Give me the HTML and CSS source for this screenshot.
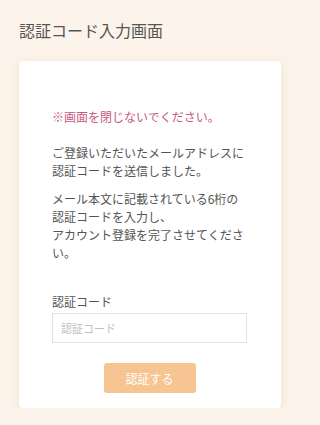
FILE: index.html
```html
<!DOCTYPE html>
<html lang="ja">
<head>
<meta charset="utf-8">
<meta name="viewport" content="width=device-width, initial-scale=1">
<link rel="stylesheet" href="styles.css">
</head>
<body>
<div class="page">
  <h1 class="title">認証コード入力画面</h1>
  <div class="card">
    <p class="warn">※画面を閉じないでください。</p>
    <p class="msg">ご登録いただいたメールアドレスに<br>認証コードを送信しました。</p>
    <p class="msg msg2">メール本文に記載されている6桁の<br>認証コードを入力し、<br>アカウント登録を完了させてください。</p>
    <label class="label" for="code">認証コード</label>
    <input class="input" id="code" type="text" placeholder="認証コード">
    <div class="actions"><button class="btn">認証する</button></div>
  </div>
</div>
</body>
</html>
```
FILE: styles.css
```css
html, body {
  margin: 0;
  padding: 0;
  background: #fcf3ea;
  font-family: "Noto Sans CJK JP", "Noto Sans", sans-serif;
  color: #555;
}
.page {
  width: 300px;
  box-sizing: border-box;
  padding: 20px 19px 0;
}
.title {
  margin: 0;
  font-size: 16px;
  font-weight: 400;
  line-height: 20px;
  color: #555;
}
.card {
  margin-top: 21px;
  background: #fff;
  border-radius: 4px;
  box-shadow: 0 2px 8px rgba(200, 170, 140, 0.25);
  padding: 47px 34px 15px 33px;
}
.warn {
  margin: 0;
  font-size: 12px;
  line-height: 18px;
  color: #c65a82;
}
.msg {
  margin: 18px 0 0;
  font-size: 12px;
  line-height: 18px;
  color: #555;
}
.msg2 {
  margin-top: 10px;
}
.label {
  display: block;
  margin-top: 31px;
  font-size: 12px;
  line-height: 18px;
  color: #555;
}
.input {
  display: block;
  box-sizing: border-box;
  width: 100%;
  height: 30px;
  margin-top: 2px;
  padding: 0 8px;
  border: 1px solid #e2e2e2;
  border-radius: 0;
  font-family: inherit;
  font-size: 11px;
  color: #555;
  background: #fff;
}
.input::placeholder {
  color: #c0c0c0;
}
.actions {
  display: flex;
  justify-content: center;
  margin-top: 20px;
}
.btn {
  width: 92px;
  height: 30px;
  border: none;
  border-radius: 3px;
  background: #f6c592;
  color: #fff;
  font-family: inherit;
  font-size: 12px;
}
```
